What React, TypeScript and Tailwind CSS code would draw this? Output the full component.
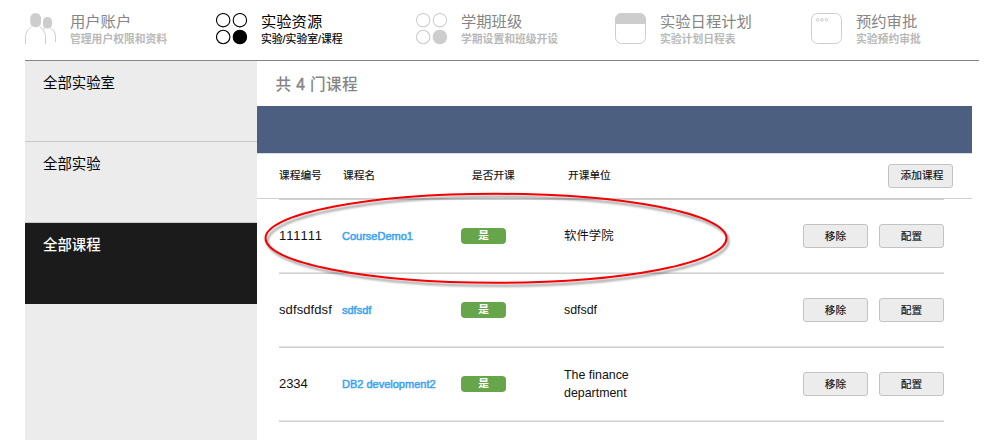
import type { ReactNode } from "react";

function UsersIcon() {
  return (
    <svg width="32" height="32" viewBox="0 0 32 32" fill="none">
      <rect x="5.2" y="0.3" width="10.8" height="14" rx="5" fill="#cdcdcd" />
      <rect x="18" y="4" width="9" height="11.5" rx="4.3" fill="#cdcdcd" />
      <path d="M.5 31V24.500C.5 19 3.500 15.500 6.500 14M14.500 14C18 15.500 20.500 19.500 20.500 24.500V31" stroke="#cdcdcd" />
      <path d="M25.500 15.500C29 17 30.500 20 30.500 23.500V29M18 15.600L20 14.800" stroke="#cdcdcd" />
    </svg>
  );
}

function CirclesIcon({ color }: { color: string }) {
  return (
    <svg width="32" height="32" viewBox="0 0 32 32" fill="none" stroke={color} strokeWidth="1.100">
      <circle cx="7.200" cy="7.200" r="6.700" />
      <circle cx="23.900" cy="7.200" r="6.700" />
      <circle cx="7.200" cy="24" r="6.700" />
      <circle cx="23.900" cy="24" r="6.700" fill={color} />
    </svg>
  );
}

function CalendarIcon() {
  return (
    <svg width="32" height="32" viewBox="0 0 32 32" fill="none">
      <path d="M0 11V6.500A6.500 6.500 0 0 1 6.500 0H24.500A6.500 6.500 0 0 1 31 6.500V11Z" fill="#cdcdcd" />
      <rect x=".5" y=".5" width="30" height="30" rx="6" stroke="#cdcdcd" />
    </svg>
  );
}

function WindowIcon() {
  return (
    <svg width="32" height="32" viewBox="0 0 32 32" fill="none" stroke="#cdcdcd">
      <rect x=".5" y=".5" width="30" height="30" rx="6" />
      <circle cx="6.500" cy="6.800" r="1.300" />
      <circle cx="11" cy="6.800" r="1.300" />
      <circle cx="15.500" cy="6.800" r="1.300" />
    </svg>
  );
}

const tabs = [
  { title: "用户账户", sub: "管理用户权限和资料", icon: <UsersIcon />, width: "w-[191px]" },
  { title: "实验资源", sub: "实验/实验室/课程", icon: <CirclesIcon color="#000" />, width: "w-[200px]", active: true },
  { title: "学期班级", sub: "学期设置和班级开设", icon: <CirclesIcon color="#cdcdcd" />, width: "w-[199px]" },
  { title: "实验日程计划", sub: "实验计划日程表", icon: <CalendarIcon />, width: "w-[196px]" },
  { title: "预约审批", sub: "实验预约审批", icon: <WindowIcon />, width: "w-[160px]" },
];

const courses = [
  { id: "111111", name: "CourseDemo1", unit: "软件学院", nudge: "tracking-[-0.07px]" },
  { id: "sdfsdfdsf", name: "sdfsdf", unit: "sdfsdf", nudge: "tracking-[0.1px]" },
  { id: "2334", name: "DB2 development2", unit: "The finance department", nudge: "tracking-[-0.07px]" },
];

function Button({ children, className }: { children: ReactNode; className: string }) {
  return (
    <button className={`h-6 w-[65px] rounded-[3px] border border-[#c3c3c3] bg-[#ececec] text-[10.7px] leading-none whitespace-nowrap text-[#111] [-webkit-text-stroke:0.15px_#111] ${className}`}>
      {children}
    </button>
  );
}

export default function App() {
  return (
    <div className="relative h-[440px] w-[994px] overflow-hidden bg-white pl-[25px] font-['Liberation_Sans','Noto_Sans_CJK_SC',sans-serif] text-[#111]">
      <header className="flex h-[61px] w-[954px] border-b border-[#858585] pt-[13px]">
        {tabs.map((tab) => (
          <div key={tab.title} className={`flex shrink-0 ${tab.width}`}>
            <div className="w-[45px] shrink-0">{tab.icon}</div>
            <div className="whitespace-nowrap">
              <div className={`h-[18px] text-[15.3px] leading-[18px] ${tab.active ? "text-black" : "text-[#858585]"}`}>{tab.title}</div>
              <div className={`h-4 text-[10.8px] leading-4 ${tab.active ? "text-black [-webkit-text-stroke:0.15px_#000]" : "font-bold text-[#b9b9b9]"}`}>{tab.sub}</div>
            </div>
          </div>
        ))}
      </header>
      <div className="flex h-[379px]">
        <nav className="w-[232px] shrink-0 bg-[#ececec] text-[14.4px] leading-5 text-black">
          <div className="h-[81px] border-b border-[#c9c9c9] pt-3 pl-[18px]">全部实验室</div>
          <div className="h-[81px] border-b border-[#c9c9c9] pt-3 pl-[18px]">全部实验</div>
          <div className="h-[81px] bg-[#1b1b1b] pt-3 pl-[18px] font-medium text-white">全部课程</div>
        </nav>
        <main className="w-[715px]">
          <h1 className="h-[45px] pt-3 pl-[18.5px] text-[15.6px] leading-6 font-medium tracking-[0.4px] text-[#858585]">
            共 <span className="[-webkit-text-stroke:0.5px_#858585]">4</span> 门课程
          </h1>
          <div className="h-12 border-b border-[#d5dbe5] bg-[#4d5f80]" />
          <div className="flex h-[45px] items-center border-b border-[#cfcfcf] pr-[19px] pl-[22px] text-[10.7px] [-webkit-text-stroke:0.15px_#111]">
            <span className="w-16 pb-0.5">课程编号</span>
            <span className="w-[129px] pb-0.5">课程名</span>
            <span className="w-24 pb-0.5">是否开课</span>
            <span className="flex-1 pb-0.5">开课单位</span>
            <Button className="pb-px pl-[3px]">添加课程</Button>
          </div>
          <div className="ml-[22px] w-[665px]">
            {courses.map((c) => (
              <div key={c.id} className="flex h-[74px] items-center border-t border-b border-t-[#d1d1d1] border-b-[#e4e4e4] text-[12.5px] leading-[18px]">
                <span className={`w-[63px] text-[13px] whitespace-nowrap [font-kerning:none] ${c.nudge}`}>{c.id}</span>
                <span className="w-[119px] text-[11px] font-medium whitespace-nowrap text-[#3aa3f4] [-webkit-text-stroke:0.5px_#3aa3f4]">{c.name}</span>
                <span className="h-4 w-[45px] rounded-sm bg-[#67a54b] text-center text-[10.7px] leading-[15px] font-bold text-white">是</span>
                <span className="ml-[58px] w-[84px] text-[12.4px]">{c.unit}</span>
                <div className="ml-auto flex gap-[11px]">
                  <Button className="pt-px">移除</Button>
                  <Button className="pt-px">配置</Button>
                </div>
              </div>
            ))}
            <div className="h-px bg-[#d1d1d1]" />
          </div>
        </main>
      </div>
      <svg className="pointer-events-none absolute top-[185px] left-[257px] drop-shadow-[2px_3px_1px_rgba(0,0,0,0.4)]" width="480" height="108" viewBox="0 0 480 108" fill="none">
        <ellipse cx="239" cy="53.300" rx="230.500" ry="44.500" stroke="#f50000" strokeWidth="2" />
      </svg>
    </div>
  );
}
